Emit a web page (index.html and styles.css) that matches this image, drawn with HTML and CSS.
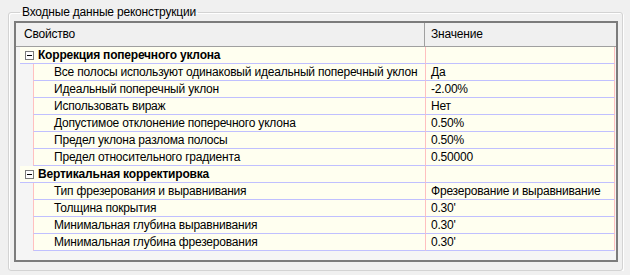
FILE: index.html
```html
<!DOCTYPE html>
<html lang="ru">
<head>
<meta charset="utf-8">
<link rel="stylesheet" href="styles.css">
</head>
<body>
<fieldset class="group">
  <legend class="group-title">Входные данные реконструкции</legend>
  <div class="grid">
    <div class="head">
      <div class="head-name">Свойство</div>
      <div class="head-value">Значение</div>
    </div>

    <div class="row cat-row">
      <div class="gut-s"></div>
      <div class="cat"><span class="box"></span><span>Коррекция поперечного уклона</span></div>
      <div class="val"></div>
    </div>
    <div class="row">
      <div class="gut"></div>
      <div class="name">Все полосы используют одинаковый идеальный поперечный уклон</div>
      <div class="val">Да</div>
    </div>
    <div class="row">
      <div class="gut"></div>
      <div class="name">Идеальный поперечный уклон</div>
      <div class="val">-2.00%</div>
    </div>
    <div class="row">
      <div class="gut"></div>
      <div class="name">Использовать вираж</div>
      <div class="val">Нет</div>
    </div>
    <div class="row">
      <div class="gut"></div>
      <div class="name">Допустимое отклонение поперечного уклона</div>
      <div class="val">0.50%</div>
    </div>
    <div class="row">
      <div class="gut"></div>
      <div class="name">Предел уклона разлома полосы</div>
      <div class="val">0.50%</div>
    </div>
    <div class="row">
      <div class="gut"></div>
      <div class="name">Предел относительного градиента</div>
      <div class="val">0.50000</div>
    </div>

    <div class="row cat-row">
      <div class="gut-s"></div>
      <div class="cat"><span class="box"></span><span>Вертикальная корректировка</span></div>
      <div class="val"></div>
    </div>
    <div class="row">
      <div class="gut"></div>
      <div class="name">Тип фрезерования и выравнивания</div>
      <div class="val">Фрезерование и выравнивание</div>
    </div>
    <div class="row">
      <div class="gut"></div>
      <div class="name">Толщина покрытия</div>
      <div class="val">0.30'</div>
    </div>
    <div class="row">
      <div class="gut"></div>
      <div class="name">Минимальная глубина выравнивания</div>
      <div class="val">0.30'</div>
    </div>
    <div class="row">
      <div class="gut"></div>
      <div class="name">Минимальная глубина фрезерования</div>
      <div class="val">0.30'</div>
    </div>
  </div>
</fieldset>
</body>
</html>
```

FILE: styles.css
```css
html, body {
  margin: 0;
  padding: 0;
  background: #f0f0f0;
}
body {
  font-family: "Liberation Sans", Arial, sans-serif;
  font-size: 12px;
  letter-spacing: -0.2px;
  color: #000;
  padding: 4px 0 0 8px;
}
.group {
  box-sizing: border-box;
  width: 615px;
  height: 267px;
  margin: 0;
  padding: 0 0 0 5px;
  border: 1px solid #d3d3d3;
  border-radius: 3px;
  box-shadow: inset 1px 1px 0 #fff, 1px 1px 0 #fff;
}
.group-title {
  margin-left: 6px;
  padding: 0 2px;
  line-height: 16px;
  height: 16px;
}
.grid {
  box-sizing: border-box;
  width: 604px;
  height: 241px;
  margin-top: 1px;
  border: 2px solid #7c7c7c;
  background: #f5f5f5;
  display: flex;
  flex-direction: column;
}
.head {
  display: flex;
  height: 24px;
  box-sizing: border-box;
  border-bottom: 1px solid #a0a0a0;
  background: #f0f0f0;
  line-height: 23px;
}
.head-name {
  width: 409px;
  box-sizing: border-box;
  padding-left: 8px;
  border-right: 1px solid #a0a0a0;
}
.head-value {
  flex: 1;
  padding-left: 6px;
}
.row {
  display: flex;
  height: 17px;
  line-height: 16px;
  margin-right: 1px;
}
.gut {
  width: 17px;
  flex: none;
}
.gut-s {
  width: 4px;
  flex: none;
}
.name {
  width: 392px;
  flex: none;
  box-sizing: border-box;
  padding-left: 20px;
  background: #fffff0;
  border-left: 1px solid #ffc0c0;
  border-bottom: 1px solid #c0c0ff;
  white-space: nowrap;
  overflow: hidden;
}
.cat {
  width: 405px;
  flex: none;
  box-sizing: border-box;
  padding-left: 5px;
  background: #fffff0;
  border-bottom: 1px solid #c0c0ff;
  font-weight: bold;
  display: flex;
  align-items: center;
  gap: 4px;
  white-space: nowrap;
}
.box {
  width: 9px;
  height: 9px;
  box-sizing: border-box;
  border: 1px solid #7a7a7a;
  background: #fff;
  position: relative;
  flex: none;
}
.box::after {
  content: "";
  position: absolute;
  left: 1px;
  top: 3px;
  width: 5px;
  height: 1px;
  background: #000;
}
.val {
  flex: 1;
  box-sizing: border-box;
  padding-left: 5px;
  background: #fffff0;
  border-left: 1px solid #ffc0c0;
  border-right: 1px solid #ffc0c0;
  border-bottom: 1px solid #c0c0ff;
  white-space: nowrap;
  overflow: hidden;
}
```
